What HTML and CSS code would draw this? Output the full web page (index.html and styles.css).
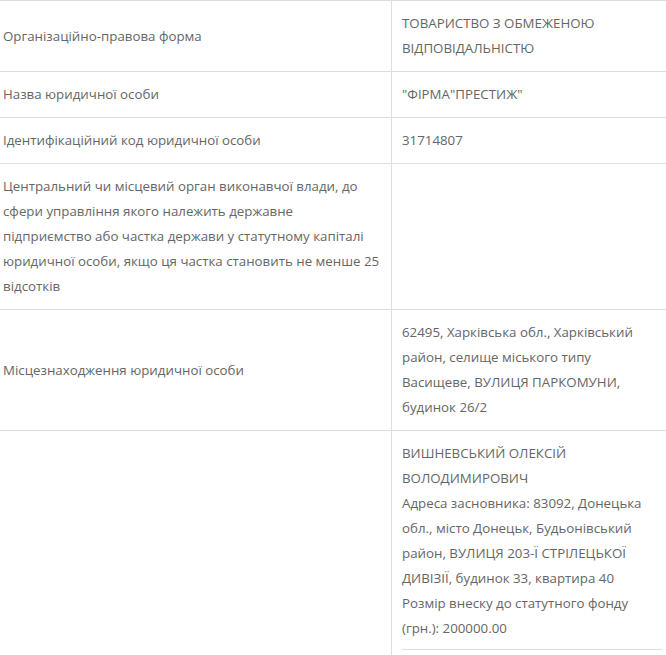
FILE: index.html
```html
<!DOCTYPE html>
<html lang="uk"><head><meta charset="utf-8"><title>Відомості про юридичну особу</title><link rel="stylesheet" href="styles.css"></head>
<body>
<div class="info">
  <div class="row">
    <div class="label">Організаційно-правова форма</div>
    <div class="value">ТОВАРИСТВО З ОБМЕЖЕНОЮ ВІДПОВІДАЛЬНІСТЮ</div>
  </div>
  <div class="row">
    <div class="label">Назва юридичної особи</div>
    <div class="value">"ФІРМА"ПРЕСТИЖ"</div>
  </div>
  <div class="row">
    <div class="label">Ідентифікаційний код юридичної особи</div>
    <div class="value">31714807</div>
  </div>
  <div class="row">
    <div class="label">Центральний чи місцевий орган виконавчої влади, до сфери управління якого належить державне підприємство або частка держави у статутному капіталі юридичної особи, якщо ця частка становить не менше 25 відсотків</div>
    <div class="value"></div>
  </div>
  <div class="row">
    <div class="label">Місцезнаходження юридичної особи</div>
    <div class="value">62495, Харківська обл., Харківський район, селище міського типу Васищеве, ВУЛИЦЯ ПАРКОМУНИ, будинок 26/2</div>
  </div>
  <div class="row">
    <div class="label"></div>
    <div class="value">
      <div class="founder">
        <div>ВИШНЕВСЬКИЙ ОЛЕКСІЙ ВОЛОДИМИРОВИЧ</div>
        <div>Адреса засновника: 83092, Донецька обл., місто Донецьк, Будьонівський район, ВУЛИЦЯ 203-Ї СТРІЛЕЦЬКОЇ ДИВІЗІЇ, будинок 33, квартира 40</div>
        <div>Розмір внеску до статутного фонду (грн.): 200000.00</div>
      </div>
    </div>
  </div>
</div>
</body></html>
```
FILE: styles.css
```css
body{margin:0;background:#fff;color:#666;font-family:"Open Sans","Noto Sans",sans-serif;font-size:13.3px;line-height:25px}
.info{border-top:1px solid #ddd}
.row{display:grid;grid-template-columns:391px 1fr;border-bottom:1px solid #ddd}
.label{padding:10px 11px 10px 3px;display:flex;align-items:center}
.value{border-left:1px solid #ddd;padding:10px 4px 10px 10px}
.founder{padding-bottom:8px;border-bottom:1px solid #ddd}
```
